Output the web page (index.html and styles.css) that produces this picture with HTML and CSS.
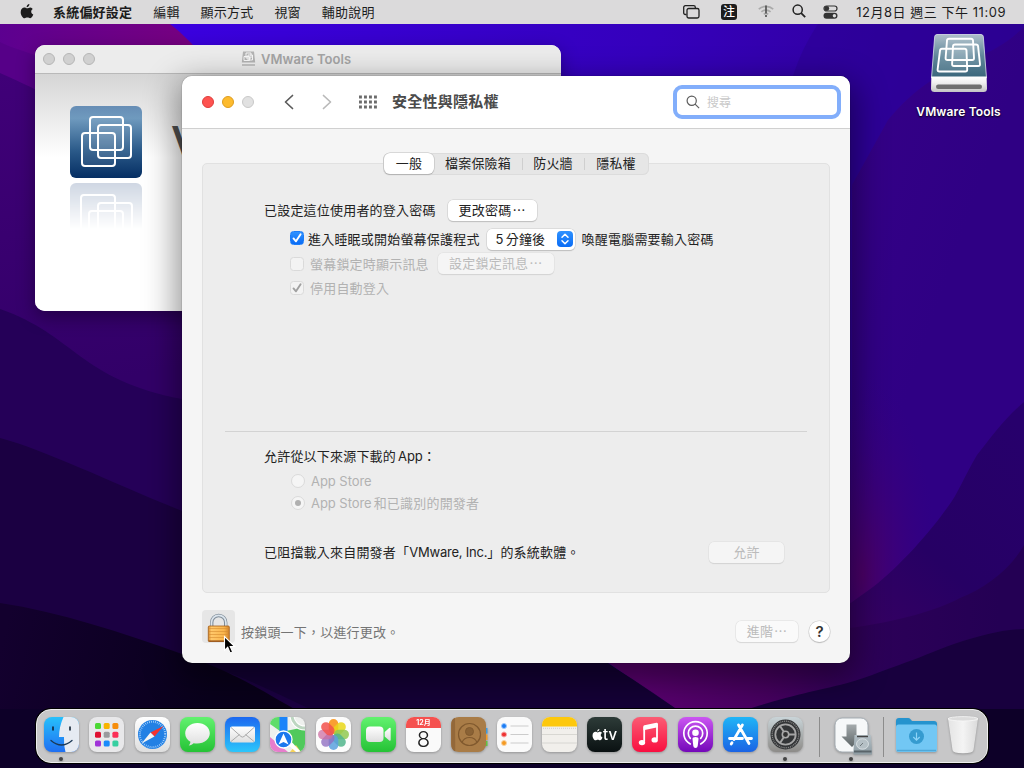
FILE: index.html
```
<!DOCTYPE html>
<html lang="zh-Hant">
<head>
<meta charset="utf-8">
<title>安全性與隱私權</title>
<link rel="stylesheet" href="styles.css">
</head>
<body>
<div class="desktop">
  <svg class="wallpaper" viewBox="0 0 1024 768" preserveAspectRatio="none">
    <defs>
      <linearGradient id="wBase" gradientUnits="userSpaceOnUse" x1="200" y1="0" x2="1024" y2="300"><stop offset="0" stop-color="#3a00de"/><stop offset=".5" stop-color="#3500bc"/><stop offset=".8" stop-color="#30009a"/><stop offset="1" stop-color="#2c0080"/></linearGradient>
      <linearGradient id="wMag" gradientUnits="userSpaceOnUse" x1="0" y1="24" x2="195" y2="50"><stop offset="0" stop-color="#5c0090"/><stop offset="1" stop-color="#780080"/></linearGradient>
      <linearGradient id="wLeft" gradientUnits="userSpaceOnUse" x1="0" y1="73" x2="60" y2="390"><stop offset="0" stop-color="#400078"/><stop offset="1" stop-color="#320068"/></linearGradient>
      <linearGradient id="wNavy" gradientUnits="userSpaceOnUse" x1="0" y1="650" x2="300" y2="720"><stop offset="0" stop-color="#13002e"/><stop offset=".7" stop-color="#09001c"/><stop offset="1" stop-color="#090018"/></linearGradient>
      <linearGradient id="wDeep" gradientUnits="userSpaceOnUse" x1="850" y1="0" x2="1024" y2="60"><stop offset="0" stop-color="#360088"/><stop offset="1" stop-color="#2f0084"/></linearGradient>
      <radialGradient id="wGlow" gradientUnits="userSpaceOnUse" cx="862" cy="575" r="100" gradientTransform="translate(862 575) scale(.75 2) translate(-862 -575)"><stop offset="0" stop-color="#4c0068"/><stop offset="1" stop-color="#380080" stop-opacity="0"/></radialGradient>
      <linearGradient id="wRight" gradientUnits="userSpaceOnUse" x1="850" y1="620" x2="1024" y2="430"><stop offset="0" stop-color="#360062"/><stop offset=".4" stop-color="#260064"/><stop offset="1" stop-color="#27006c"/></linearGradient>
      <linearGradient id="wLow" gradientUnits="userSpaceOnUse" x1="640" y1="0" x2="1000" y2="0"><stop offset="0" stop-color="#5a0070"/><stop offset=".35" stop-color="#470060"/><stop offset=".65" stop-color="#2c0058"/><stop offset="1" stop-color="#240054"/></linearGradient>
    </defs>
    <rect width="1024" height="768" fill="url(#wBase)"/>
    <path d="M818 24C806 42 798 60 793 76V200H1024V24Z" fill="#2c0094" opacity=".6"/>
    <path d="M1024 27C1008 42 995 50 977 57C940 72 915 88 888 120L852 185V768H1024Z" fill="url(#wDeep)"/>
    <path d="M0 24H170C210 55 260 120 300 300H0Z" fill="url(#wMag)"/>
    <path d="M0 42C25 55 90 66 210 130V330H0Z" fill="#560088"/>
    <path d="M0 73C20 82 50 95 80 115L320 300V450H0Z" fill="url(#wLeft)"/>
    <rect x="780" y="330" width="244" height="380" fill="url(#wGlow)"/>
    <path d="M1024 402C1005 418 992 436 977 455C965 475 958 494 947 508C930 532 900 566 873 587L820 625V768H1024Z" fill="url(#wRight)"/>
    <path d="M1024 545C1010 570 985 588 960 598C935 611 900 621 850 628L590 650L676 710H1024Z" fill="url(#wLow)"/>
    <path d="M1024 629C1000 630 980 636 963 641C940 648 925 656 907 662C880 672 860 680 840 685C810 692 790 696 745 710H1024Z" fill="#18003e"/>
    <path d="M0 309C75 335 80 380 182 399C350 430 450 500 600 650V710H0Z" fill="#250058"/>
    <path d="M0 438C45 450 110 482 182 511C350 550 510 590 675 708H0Z" fill="#1b0042"/>
    <path d="M200 663H608L676 709V768H0V709H310C270 690 240 675 200 663Z" fill="#140036"/>
    <path d="M0 603C60 612 120 632 182 654C240 675 260 690 300 712H0Z" fill="url(#wNavy)"/>
    <path d="M0 709H1024V768H0Z" fill="#0d0028"/>
  </svg>

  <header class="menubar">
    <nav class="menus">
      <svg class="apple" width="14" height="17" viewBox="0 0 14 17"><path d="M9.4 1c.1 1.900-1.300 3.100-2.800 3.200C6.500 2.600 7.900 1.200 9.400 1zM12.700 6.100c-2.300 1.500-1.800 4.600.6 5.500-.6 1.700-1.800 3.600-3.100 3.700-1.100 0-1.400-.7-2.800-.7s-1.800.7-2.800.7C2.700 15.300.6 12 .7 9 .7 6.100 2.500 4.500 4.400 4.500c1.200 0 2.100.8 2.900.8.900 0 1.800-.9 3.100-.8 1 .1 1.800.6 2.300 1.600z" fill="#1c1c1c"/></svg>
      <b>系統偏好設定</b><span>編輯</span><span>顯示方式</span><span>視窗</span><span>輔助說明</span>
    </nav>
    <div class="status">
      <svg class="s-win" width="17" height="14" viewBox="0 0 17 14" fill="none" stroke="#222" stroke-width="1.300"><path d="M3.500 9.500H2.300A1.600 1.600 0 0 1 .7 7.900V2.300A1.600 1.600 0 0 1 2.300.7h8.400a1.600 1.600 0 0 1 1.600 1.600V3"/><rect x="4" y="3.500" width="12" height="9.500" rx="1.700"/></svg>
      <span class="ime">注</span>
      <svg class="s-wifi" width="16" height="13" viewBox="0 0 16 13" fill="none"><path d="M.8 4.200C4.800.500 11.200.500 15.200 4.200M3.400 6.800C6 4.500 10 4.500 12.600 6.800M5.800 9.300C7 8.200 9 8.200 10.200 9.300" stroke="#aaa" stroke-width="1.700"/><path d="M8 .5v8M8 10v2" stroke="#555" stroke-width="1.700"/></svg>
      <svg class="s-find" width="14" height="14" viewBox="0 0 14 14" fill="none" stroke="#222" stroke-width="1.500"><circle cx="5.700" cy="5.700" r="4.600"/><path d="M9.200 9.200l4 4" stroke-width="1.800"/></svg>
      <svg class="s-cc" width="15" height="14" viewBox="0 0 15 14"><rect x="1" y="1" width="13" height="5" rx="2.500" fill="none" stroke="#333" stroke-width="1.200"/><circle cx="3.800" cy="3.500" r="2.400" fill="#333"/><rect x=".5" y="7.700" width="14" height="6" rx="3" fill="#333"/><circle cx="11.400" cy="10.700" r="1.700" fill="#ddd"/></svg>
      <time>12月8日 週三 下午 11:09</time>
    </div>
  </header>

  <div class="volume">
    <svg width="60" height="62" viewBox="0 0 60 62">
      <defs><linearGradient id="vd" x1="0" y1="0" x2="0" y2="1"><stop offset="0" stop-color="#aebfca"/><stop offset=".5" stop-color="#5f8699"/><stop offset="1" stop-color="#39657a"/></linearGradient><linearGradient id="vf" x1="0" y1="0" x2="0" y2="1"><stop offset="0" stop-color="#fff"/><stop offset=".4" stop-color="#f0f0f0"/><stop offset="1" stop-color="#c4c4c4"/></linearGradient></defs>
      <path d="M8 1.500h44q2 0 2.300 2L57.500 45H2.500L5.700 3.500Q6 1.500 8 1.500z" fill="url(#vd)" stroke="#dce5ea" stroke-width=".8"/>
      <path d="M2.400 43.500h55.200l.4 12q0 3.500-3.500 3.500h-49Q2 59 2 55.500z" fill="url(#vf)"/>
      <rect x="7" y="51.500" width="46" height="4.500" rx="2.200" fill="#707070"/>
      <g fill="#fff" fill-opacity=".1" stroke="#fff" stroke-width="1.900" stroke-linejoin="round"><path d="M20 5.700h22q1.800 0 2 1.800l1 17.500q.1 2-1.900 2H18.500q-2 0-1.900-2L18 7.500q.1-1.800 2-1.800z"/><path d="M26 11.500h21q1.900 0 2.100 1.900L51 31q.2 2-1.800 2H25q-2 0-1.900-2l.9-17.600q.1-1.900 2-1.900z"/><path d="M13 15.700h22.500q1.900 0 2 1.900l.7 18.900q.1 2-1.900 2H10.500q-2.100 0-1.900-2L11 17.600q.2-1.900 2-1.900z"/></g>
    </svg>
    <span>VMware Tools</span>
  </div>

  <section class="window installer">
    <div class="titlebar">
      <i class="light"></i><i class="light"></i><i class="light"></i>
      <div class="caption">
        <svg width="15" height="16" viewBox="0 0 15 16"><path d="M2 .500h11l1.200 11H.8z" fill="#b4b4b4"/><path d="M.7 12h13.600v3.300H.7z" fill="#efefef"/><path d="M1 14h13" stroke="#999" stroke-width="1.200"/><path d="M5 2h5v5H5zM7 4h4.500v5H7zM3 5.500h5.500v4H3z" fill="none" stroke="#f8f8f8"/></svg>
        <span>VMware Tools</span>
      </div>
    </div>
    <div class="installer-body">
      <div class="logo-col">
        <svg class="logo" width="72" height="72" viewBox="0 0 72 72"><defs><linearGradient id="lg" x1="0" y1="0" x2="0" y2="1"><stop offset="0" stop-color="#668db5"/><stop offset=".17" stop-color="#6f9abe"/><stop offset=".62" stop-color="#2b5a89"/><stop offset="1" stop-color="#052e63"/></linearGradient></defs><rect width="72" height="72" rx="6" fill="url(#lg)"/><g fill="#fff" fill-opacity=".08" stroke="#fff" stroke-width="2"><rect x="20" y="11" width="33" height="33" rx="3"/><rect x="28" y="19" width="33" height="33" rx="3"/><rect x="12" y="27" width="33" height="33" rx="3"/></g></svg>
        <svg class="mirror" width="72" height="48" viewBox="0 0 72 48"><rect width="72" height="72" rx="6" fill="#cfd7e3"/><g fill="none" stroke="#fff" stroke-width="2"><rect x="11" y="12" width="34" height="40" rx="3"/><rect x="28" y="20" width="34" height="40" rx="3"/><rect x="19" y="28" width="34" height="40" rx="3"/></g></svg>
      </div>
      <span class="big">V</span>
    </div>
  </section>

  <section class="window prefs">
    <div class="toolbar">
      <div class="lights"><i class="light red"></i><i class="light yellow"></i><i class="light gray"></i></div>
      <svg class="back" width="10" height="16" viewBox="0 0 10 16" fill="none" stroke="#5b5b5b" stroke-width="1.700" stroke-linecap="round" stroke-linejoin="round"><path d="M8.500 1.500L1.500 8l7 6.500"/></svg>
      <svg class="fwd" width="10" height="16" viewBox="0 0 10 16" fill="none" stroke="#b9b9b9" stroke-width="1.700" stroke-linecap="round" stroke-linejoin="round"><path d="M1.500 1.500l7 6.500-7 6.500"/></svg>
      <svg class="grid" width="19" height="14" viewBox="0 0 19 14" fill="none" stroke="#6c6c6c" stroke-width="2.800" stroke-dasharray="2.900 2.100"><path d="M0 2h18M0 7h18M0 12h18"/></svg>
      <h1>安全性與隱私權</h1>
      <div class="search"><svg width="14" height="14" viewBox="0 0 14 14" fill="none" stroke="#5c5c5c" stroke-width="1.200"><circle cx="5.700" cy="5.700" r="4.600"/><path d="M9.100 9.100l4 4"/></svg><span>搜尋</span></div>
    </div>
    <div class="content">
      <div class="tabs"><span class="tab on">一般</span><span class="tab t2">檔案保險箱</span><span class="tab t3">防火牆</span><span class="tab t4">隱私權</span></div>
      <div class="panel">
        <div class="row r1"><span>已設定這位使用者的登入密碼</span><button class="btn change">更改密碼<em>⋯</em></button></div>
        <div class="row r2"><i class="check blue"><svg width="14" height="14" viewBox="0 0 14 14" fill="none" stroke="#fff" stroke-width="1.900" stroke-linecap="round" stroke-linejoin="round"><path d="M3.500 7.400l2.500 2.900 4.600-7"/></svg></i><span>進入睡眠或開始螢幕保護程式</span>
          <div class="popup"><span><span class="num">5</span>分鐘後</span><svg width="16" height="16" viewBox="0 0 16 16"><defs><linearGradient id="pb" x1="0" y1="0" x2="0" y2="1"><stop offset="0" stop-color="#2f92ff"/><stop offset="1" stop-color="#0a6cf5"/></linearGradient></defs><rect width="16" height="16" rx="4" fill="url(#pb)"/><path d="M5 6.200L8 3.200l3 3M5 9.800l3 3 3-3" fill="none" stroke="#fff" stroke-width="1.500" stroke-linecap="round" stroke-linejoin="round"/></svg></div>
          <span>喚醒電腦需要輸入密碼</span></div>
        <div class="row r3 off"><i class="check"></i><span>螢幕鎖定時顯示訊息</span><button class="btn msg off">設定鎖定訊息<em>⋯</em></button></div>
        <div class="row r3 off"><i class="check"><svg width="14" height="14" viewBox="0 0 14 14" fill="none" stroke="#a0a0a0" stroke-width="1.900" stroke-linecap="round" stroke-linejoin="round"><path d="M3.500 7.400l2.500 2.900 4.600-7"/></svg></i><span>停用自動登入</span></div>
        <hr>
        <div class="row r5">允許從以下來源下載的<span class="latin app-word">App</span>：</div>
        <div class="row radio off"><i class="dot"></i><span class="latin">App Store</span></div>
        <div class="row radio off second"><i class="dot sel"></i><span class="latin">App Store</span><span class="after">和已識別的開發者</span></div>
        <div class="row r8"><div>已阻擋載入來自開發者「<span class="latin vendor">VMware, Inc.</span>」的系統軟體。</div><button class="btn allow off">允許</button></div>
      </div>
      <div class="footer">
        <div class="lock"><svg width="33" height="33" viewBox="0 0 33 33"><defs><linearGradient id="lk" x1="0" y1="0" x2="1" y2="0"><stop offset="0" stop-color="#d98c30"/><stop offset=".15" stop-color="#ffc86a"/><stop offset=".75" stop-color="#f9b54c"/><stop offset="1" stop-color="#d0822c"/></linearGradient></defs><path d="M9.700 17v-4.500a7 7 0 0 1 14 0V17" fill="none" stroke="#7f8c98" stroke-width="3.400"/><path d="M9.500 17v-4.500a7.200 7.200 0 0 1 14.400 0V17" fill="none" stroke="#dce5ed" stroke-width="1.700"/><rect x="6.300" y="16" width="21" height="15.500" rx="1" fill="url(#lk)" stroke="#a45e18" stroke-width=".8"/><path d="M7 18.500h19.500M7 21.500h19.500M7 24.500h19.500M7 27.500h19.500" stroke="#d58c30" stroke-width=".6"/><path d="M6.500 31h20.500" stroke="#8a4510"/></svg></div>
        <span class="hint">按鎖頭一下，以進行更改。</span>
        <button class="btn adv off">進階<em>⋯</em></button>
        <button class="help">?</button>
      </div>
    </div>
  </section>

  <svg class="cursor" width="14" height="20" viewBox="0 0 14 20"><path d="M1.500 1.500v13.800l3.200-3 2.400 5.600 2.500-1-2.400-5.400h4.500z" fill="#000" stroke="#fff" stroke-width="1.100"/></svg>

  <footer class="dock">
    <svg width="0" height="0" class="defs"><defs>
      <linearGradient id="dFind" x1="0" y1="0" x2="0" y2="1"><stop offset="0" stop-color="#27c0fb"/><stop offset="1" stop-color="#1f6ff2"/></linearGradient>
      <linearGradient id="dWhite" x1="0" y1="0" x2="0" y2="1"><stop offset="0" stop-color="#fff"/><stop offset="1" stop-color="#dedede"/></linearGradient>
      <linearGradient id="dGreen" x1="0" y1="0" x2="0" y2="1"><stop offset="0" stop-color="#62f26f"/><stop offset="1" stop-color="#25c235"/></linearGradient>
      <linearGradient id="dMail" x1="0" y1="0" x2="0" y2="1"><stop offset="0" stop-color="#1c68f0"/><stop offset="1" stop-color="#2cc6fb"/></linearGradient>
      <linearGradient id="dMusic" x1="0" y1="0" x2="0" y2="1"><stop offset="0" stop-color="#fb5c74"/><stop offset="1" stop-color="#f90f40"/></linearGradient>
      <linearGradient id="dPod" x1="0" y1="0" x2="0" y2="1"><stop offset="0" stop-color="#cb56f2"/><stop offset="1" stop-color="#7408b9"/></linearGradient>
      <linearGradient id="dStore" x1="0" y1="0" x2="0" y2="1"><stop offset="0" stop-color="#20b5f7"/><stop offset="1" stop-color="#1a63e4"/></linearGradient>
      <linearGradient id="dGear" x1="0" y1="0" x2="0" y2="1"><stop offset="0" stop-color="#c9d4d8"/><stop offset="1" stop-color="#8d8b88"/></linearGradient>
      <linearGradient id="dDisk" x1="0" y1="0" x2="0" y2="1"><stop offset="0" stop-color="#b3bfc5"/><stop offset="1" stop-color="#8e9ca3"/></linearGradient>
      <linearGradient id="dArrow" x1="0" y1="0" x2="0" y2="1"><stop offset="0" stop-color="#a5abad"/><stop offset="1" stop-color="#5d6567"/></linearGradient>
      <clipPath id="rr"><rect width="35" height="35" rx="8"/></clipPath>
    </defs></svg>
    <div class="app run"><svg viewBox="0 0 35 35"><g clip-path="url(#rr)"><rect width="35" height="35" fill="url(#dFind)"/><path d="M19.500 0Q15 10 15 20h5q-.5 8 1.500 15H35V0z" fill="#e6ebf2"/></g><path d="M9 10v3M26 10v3" stroke="#123" stroke-width="1.600" stroke-linecap="round"/><path d="M7 23.500q10.500 9 21 0" fill="none" stroke="#1b3855" stroke-width="1.300" stroke-linecap="round"/></svg></div>
    <div class="app"><svg viewBox="0 0 35 35"><rect width="35" height="35" rx="8" fill="#e8e8ea"/><g><rect x="6" y="6" width="6" height="6" rx="1.500" fill="#4cd834"/><rect x="14.700" y="6" width="6" height="6" rx="1.500" fill="#f8b400"/><rect x="23.400" y="6" width="6" height="6" rx="1.500" fill="#f68d0c"/><rect x="6" y="14.700" width="6" height="6" rx="1.500" fill="#df1030"/><rect x="14.700" y="14.700" width="6" height="6" rx="1.500" fill="#9a9a9e"/><rect x="23.400" y="14.700" width="6" height="6" rx="1.500" fill="#fb2e56"/><rect x="6" y="23.400" width="6" height="6" rx="1.500" fill="#a033d8"/><rect x="14.700" y="23.400" width="6" height="6" rx="1.500" fill="#188bfb"/><rect x="23.400" y="23.400" width="6" height="6" rx="1.500" fill="#36cfa0"/></g></svg></div>
    <div class="app"><svg viewBox="0 0 35 35"><rect width="35" height="35" rx="8" fill="url(#dWhite)"/><circle cx="17.500" cy="17.500" r="14.500" fill="#2280e4"/><circle cx="17.500" cy="17.500" r="12.700" fill="none" stroke="#b9dcff" stroke-width="2" stroke-dasharray=".7 1.300"/><path d="M28.500 9L19.500 19.500l-4-4z" fill="#f4322e"/><path d="M6.500 26.500l9-11 4 4z" fill="#f4f4f4"/></svg></div>
    <div class="app"><svg viewBox="0 0 35 35"><rect width="35" height="35" rx="8" fill="url(#dGreen)"/><path d="M17.500 6C10.500 6 5.200 10.500 5.200 16.300c0 3.700 2 6.700 5.200 8.500 0 1.500-.8 2.700-1.700 3.700 2.200-.2 3.800-1.100 4.900-2.300 9 1.700 16.200-3.200 16.200-9.900C29.800 10.500 24.500 6 17.500 6z" fill="url(#dWhite)"/></svg></div>
    <div class="app"><svg viewBox="0 0 35 35"><rect width="35" height="35" rx="8" fill="url(#dMail)"/><rect x="5" y="9.500" width="25" height="16" rx="2" fill="url(#dWhite)"/><path d="M6 10.500l10 9q1.500 1.200 3 0l10-9M6 24.500l8.500-7M29 24.500l-8.500-7" fill="none" stroke="#aaa" stroke-width="1"/></svg></div>
    <div class="app"><svg viewBox="0 0 35 35"><g clip-path="url(#rr)"><rect width="35" height="35" fill="#eef0ee"/><path d="M0 0h10v14L0 7z" fill="#5fdd69"/><path d="M0 20l18 15H0z" fill="#e77dcc"/><path d="M16 14l19-4v25H29L16 20z" fill="#50c95c"/><path d="M20 35l6-7 5 7z" fill="#f7d259"/><path d="M17 20l14 15h-5L14 24z" fill="#fff"/><path d="M22-3a13 13 0 0 0 14 14" fill="none" stroke="#fff" stroke-width="5"/><path d="M22-3a13 13 0 0 0 14 14" fill="none" stroke="#bdd6c1" stroke-width="3"/><path d="M9.500 0h8v17h-8z" fill="#1b84fa"/></g><circle cx="13.500" cy="22.500" r="8.500" fill="#1b78ee" stroke="#fff" stroke-width="1.300"/><path d="M13.500 16.500l5 11-5-2.500-5 2.500z" fill="#fff"/></svg></div>
    <div class="app"><svg viewBox="0 0 35 35"><rect width="35" height="35" rx="8" fill="#fcfcfc"/><g opacity=".9" transform="translate(17.500 17.500)"><rect x="-4.800" y="-15.500" width="9.600" height="15" rx="4.800" fill="#f9961d"/><rect x="-4.800" y="-15.500" width="9.600" height="15" rx="4.800" fill="#e8d400" fill-opacity=".85" transform="rotate(45)"/><rect x="-4.800" y="-15.500" width="9.600" height="15" rx="4.800" fill="#86c440" fill-opacity=".85" transform="rotate(90)"/><rect x="-4.800" y="-15.500" width="9.600" height="15" rx="4.800" fill="#3fae80" fill-opacity=".85" transform="rotate(135)"/><rect x="-4.800" y="-15.500" width="9.600" height="15" rx="4.800" fill="#4a98dc" fill-opacity=".85" transform="rotate(180)"/><rect x="-4.800" y="-15.500" width="9.600" height="15" rx="4.800" fill="#8560bb" fill-opacity=".8" transform="rotate(225)"/><rect x="-4.800" y="-15.500" width="9.600" height="15" rx="4.800" fill="#c8609a" fill-opacity=".75" transform="rotate(270)"/><rect x="-4.800" y="-15.500" width="9.600" height="15" rx="4.800" fill="#f24038" fill-opacity=".85" transform="rotate(315)"/></g></svg></div>
    <div class="app"><svg viewBox="0 0 35 35"><rect width="35" height="35" rx="8" fill="url(#dGreen)"/><rect x="5" y="9.500" width="17.500" height="15.500" rx="4" fill="url(#dWhite)"/><path d="M23.700 15l4.500-4q1.500-.8 1.500.8v11q0 1.600-1.500.8l-4.500-4z" fill="url(#dWhite)"/></svg></div>
    <div class="app cal"><span class="mon">12月</span><span class="day">8</span></div>
    <div class="app"><svg viewBox="0 0 35 35"><path d="M34 11h2.500v5.500H34z" fill="#3b9be0"/><path d="M34 17.500h2.500V23H34z" fill="#f39b24"/><path d="M34 24h2.500v5H34z" fill="#62c242"/><rect width="35" height="35" rx="8" fill="#a97c47"/><path d="M4 .8Q0 2 .3 8v19q0 6 4 7.500z" fill="#93683a"/><g fill="none" stroke="#80592e" stroke-width="1.200"><circle cx="18.500" cy="17.500" r="11"/><path d="M11 25.500q2-5 7.500-5t7.500 5"/></g><circle cx="18.500" cy="14.500" r="4" fill="#8a6235" stroke="#80592e"/></svg></div>
    <div class="app"><svg viewBox="0 0 35 35"><rect width="35" height="35" rx="8" fill="#fafafa"/><path d="M13.500 9h18M13.500 17.500h18M13.500 26h18" stroke="#ccc" stroke-width="1"/><g stroke-width="1"><circle cx="7" cy="9" r="2.500" fill="#1a7bf4" stroke="#9bc7fa"/><circle cx="7" cy="17.500" r="2.500" fill="#ee3333" stroke="#f7a9a9"/><circle cx="7" cy="26" r="2.500" fill="#f59a22" stroke="#f9d2a0"/></g></svg></div>
    <div class="app"><svg viewBox="0 0 35 35"><g clip-path="url(#rr)"><rect width="35" height="35" fill="#f1efeb"/><rect width="35" height="9.500" fill="#fdc80d"/><path d="M0 17.500h35M0 26h35" stroke="#d2d0cc" stroke-width=".8"/><path d="M1 11.300h34" stroke="#bbb" stroke-width=".8" stroke-dasharray=".8 1.200"/></g></svg></div>
    <div class="app tv"><svg viewBox="0 0 14 17"><path d="M9.400 1c.1 1.900-1.300 3.100-2.800 3.200C6.500 2.600 7.900 1.200 9.400 1zM12.700 6.100c-2.300 1.500-1.800 4.600.6 5.500-.6 1.700-1.800 3.600-3.100 3.700-1.100 0-1.400-.7-2.800-.7s-1.800.7-2.800.7C2.700 15.300.6 12 .7 9 .7 6.100 2.500 4.500 4.400 4.500c1.200 0 2.100.8 2.900.8.900 0 1.800-.9 3.100-.8 1 .1 1.800.6 2.300 1.600z" fill="#fff"/></svg><span>tv</span></div>
    <div class="app"><svg viewBox="0 0 35 35"><rect width="35" height="35" rx="8" fill="url(#dMusic)"/><path d="M12.200 24.500V10.200l12.800-2.700v14.300" fill="none" stroke="#fff" stroke-width="1.800"/><path d="M11.500 9.200q0-.8.900-1l12-2.500q1.300-.2 1.300.9v3.600l-14.200 3z" fill="#fff"/><ellipse cx="10" cy="25.600" rx="3.200" ry="2.600" fill="#fff"/><ellipse cx="22.700" cy="22.900" rx="3.200" ry="2.600" fill="#fff"/></svg></div>
    <div class="app"><svg viewBox="0 0 35 35"><rect width="35" height="35" rx="8" fill="url(#dPod)"/><g fill="none" stroke="#fff" stroke-width="1.700" stroke-linecap="round"><path d="M12.300 26.900a11.700 11.700 0 1 1 10.400 0"/><path d="M12.300 21.300a7.200 7.200 0 1 1 10.400 0"/></g><circle cx="17.500" cy="15.800" r="3.300" fill="#fff"/><path d="M14.500 22q0-1.900 3-1.900t3 1.900l-.8 7q-.3 2-2.200 2t-2.200-2z" fill="#fff"/></svg></div>
    <div class="app"><svg viewBox="0 0 35 35"><rect width="35" height="35" rx="8" fill="url(#dStore)"/><g stroke="#fff" stroke-width="2.800" stroke-linecap="round" fill="none"><path d="M19.400 8l-8.400 14.500M15.500 8l10.500 18.500M6.500 21.500h13M24.500 21.500h4M9 25.800l-.8 1.300"/></g></svg></div>
    <div class="app run"><svg viewBox="0 0 35 35"><rect width="35" height="35" rx="8" fill="url(#dGear)"/><circle cx="17.500" cy="17.500" r="15" fill="#333537"/><circle cx="17.500" cy="17.500" r="13.300" fill="none" stroke="#8a8a8a" stroke-width="1.300" stroke-dasharray="1 .9"/><circle cx="17.500" cy="17.500" r="10.200" fill="none" stroke="#a5a5a5" stroke-width="1.800"/><path d="M20.500 17.500H27M16 15L12 9M16 20l-4 6" stroke="#a5a5a5" stroke-width="2"/><circle cx="17.500" cy="17.500" r="3.200" fill="#333" stroke="#aaa" stroke-width="1.600"/></svg></div>
    <i class="sep s1"></i>
    <div class="app run inst"><svg viewBox="0 0 38 38"><rect x="1" y="1" width="33" height="34" rx="7" fill="#f6f8f9" stroke="#a5adb3"/><path d="M12.500 7.500h10v12h5.500L18 30 7.500 19.500h5z" fill="url(#dArrow)"/><path d="M20.500 18h16.300l1.200 15v4.500H19.500V33z" fill="url(#dDisk)"/><ellipse cx="28.500" cy="27" rx="6" ry="5.200" fill="#b5c0c5" stroke="#dfe6e8" stroke-width=".8"/><path d="M26 29l3-3" stroke="#70797d" stroke-width="1"/><path d="M20 34.500h17.500" stroke="#59646a" stroke-width="2"/><path d="M23 19.500h11" stroke="#444" stroke-width="1.400"/></svg></div>
    <i class="sep s2"></i>
    <div class="app folder"><svg viewBox="0 0 41 35"><path d="M0 4Q0 1 3 1h9q1.500 0 2.500 1.200L16 4h22q3 0 3 3v23H0z" fill="#2593ce"/><rect y="7.500" width="41" height="27.500" rx="2.500" fill="#72c7f4"/><path d="M1 33.500h39" stroke="#4fa8d8" stroke-width="1.500"/><circle cx="20.500" cy="19.500" r="7.500" fill="#359bd0"/><path d="M20.500 15.500v7.500M17.300 20l3.200 3.200 3.200-3.200" fill="none" stroke="#8dd4f8" stroke-width="1.200"/></svg></div>
    <div class="app trash"><svg viewBox="0 0 32 38"><defs><linearGradient id="tr" x1="0" y1="0" x2="1" y2="0"><stop offset="0" stop-color="#e4e4e4"/><stop offset=".5" stop-color="#f4f4f4"/><stop offset="1" stop-color="#dadada"/></linearGradient></defs><path d="M1 2.500L5.500 34q.5 3.300 10.500 3.300T26.500 34L31 2.500z" fill="url(#tr)"/><ellipse cx="16" cy="2.800" rx="15" ry="2.200" fill="#dcdcdc" stroke="#f8f8f8" stroke-width=".8"/></svg></div>
  </footer>
</div>
</body>
</html>
```
FILE: styles.css
```
* { box-sizing: border-box; }
body { margin: 0; font-family: Inter, "Noto Sans CJK TC", sans-serif; font-size: 13px; color: #222; }
h1, hr { margin: 0; }
i, em { font-style: normal; }
svg { display: block; flex: none; }
.desktop { position: relative; width: 1024px; height: 768px; overflow: hidden; background: #17003e; white-space: nowrap; }
.wallpaper { position: absolute; inset: 0; width: 1024px; height: 768px; }

.menubar { position: relative; height: 24px; display: flex; justify-content: space-between; align-items: center; background: #dbdadb; padding: 0 18px 2px 20px; letter-spacing: .2px; color: #1c1c1c; }
.menus { display: flex; align-items: center; }
.menus span { margin-left: 21px; }
.menus b { margin-left: 19px; font-weight: 700; }
.status { display: flex; align-items: center; }
.ime { width: 16px; height: 16px; margin: 1px 21px 0 21px; border-radius: 3px; background: #1d1d1d; color: #fff; font-size: 12px; line-height: 15px; text-align: center; font-weight: 500; letter-spacing: 0; }
.s-wifi { margin-right: 18px; }
.s-find { margin-right: 17px; }
.s-cc { margin-right: 17px; }
.s-win, .s-cc { margin-top: 1px; }
.status time { width: 151px; letter-spacing: .53px; display: flex; justify-content: flex-end; white-space: pre; }

.volume { position: absolute; left: 908px; top: 33px; width: 101px; display: flex; flex-direction: column; align-items: center; gap: 9px; color: #fff; font-weight: 600; font-size: 12px; line-height: 16px; letter-spacing: .15px; text-shadow: 0 1px 2px #000; }

.window { position: absolute; border-radius: 10px; overflow: hidden; }
.light { display: block; width: 12px; height: 12px; border-radius: 50%; background: #d0d0d0; border: 1px solid #b5b5b5; }
.installer { left: 35px; top: 45px; width: 526px; height: 266px; background: #fff; box-shadow: 0 6px 18px rgba(0,0,0,.35); }
.titlebar { height: 29px; display: flex; align-items: center; gap: 8px; padding-left: 8px; background: #ececec; border-bottom: 1px solid #b9b9b9; }
.caption { display: flex; align-items: center; gap: 5px; margin-left: 138px; font-weight: 600; letter-spacing: .05px; color: #a5a5a5; }
.installer-body { display: flex; height: 237px; padding: 32px 0 0 35px; background: linear-gradient(#d5d5d5, #fff 84px); }
.logo-col { display: flex; flex-direction: column; gap: 5px; }
.mirror { mask-image: linear-gradient(#000, transparent 46px); }
.big { margin: 11px 0 0 29px; font-size: 40px; line-height: 48px; font-weight: 600; color: #505050; }

.prefs { left: 182px; top: 76px; width: 668px; height: 587px; background: #f5f5f5; overflow: visible; box-shadow: 0 0 1px rgba(0,0,0,.7), 0 12px 32px 6px rgba(0,0,0,.42); }
.toolbar { height: 53px; display: flex; align-items: center; background: #fff; border-bottom: 1px solid #d0d0d0; border-radius: 10px 10px 0 0; padding: 0 9px 0 20px; }
.lights { display: flex; gap: 8px; }
.red { background: #fe5350; border-color: #df3d3b; }
.yellow { background: #fdbb2e; border-color: #de9d1f; }
.gray { background: #e1e1e1; border-color: #c9c9c9; }
.back { margin-left: 30px; }
.fwd { margin-left: 28px; }
.grid { margin-left: 27px; }
h1 { margin-left: 14px; font-size: 15px; line-height: 20px; font-weight: 700; color: #4b4b4b; letter-spacing: .25px; }
.search { margin-left: auto; width: 168px; height: 34px; border: 4px solid #82aefb; border-radius: 9px; display: flex; align-items: center; gap: 7px; padding-left: 9px; color: #c9c9c9; font-size: 12px; }
.search span { margin-top: -1px; }
.content { padding: 24px 20px 0; }
.tabs { position: relative; width: 266px; height: 22px; margin: 0 auto -12px 181px; padding-left: 1px; display: flex; border-radius: 6px; background: #e6e6e6; box-shadow: inset 0 0 0 1px #dcdcdc; }
.tab { height: 22px; line-height: 20px; text-align: center; letter-spacing: .2px; }
.on { width: 50px; height: 21px; background: #fff; border-radius: 6px; box-shadow: 0 0 0 .5px #bbb, 0 1px 1px #aaa; }
.t2 { width: 88px; }
.t3 { width: 62px; }
.t4 { width: 64px; }
.t3, .t4 { background: linear-gradient(#cfcfcf, #cfcfcf) 0 5px / 1px 12px no-repeat; }
.panel { height: 430px; padding: 35px 22px 0; background: #ededed; border: 1px solid #e1e1e1; border-radius: 5px; letter-spacing: .2px; }
.row { display: flex; align-items: center; line-height: 20px; padding-left: 39px; }
.latin { letter-spacing: -.05px; }
.vendor { letter-spacing: -.22px; }
.app-word { margin-left: 2px; }
.r1 { height: 22px; }
.btn { font: inherit; letter-spacing: .2px; color: #222; height: 21px; line-height: 19px; padding: 0; border: 0; border-radius: 5px; background: #fff; box-shadow: 0 0 0 .5px #ccc, 0 1px 1px rgba(0,0,0,.25); }
.btn em { margin-left: 1px; }
.off { color: #b2b2b2; }
.btn.off { color: #bbb; background: #f5f5f5; box-shadow: 0 0 0 .5px #ddd, 0 1px 1px rgba(0,0,0,.15); }
.change { width: 89px; margin-left: 12px; }
.check { width: 14px; height: 14px; border-radius: 3.5px; border: 1px solid #dadada; background: #f3f3f3; display: block; }
.check svg { margin: -1px; }
.blue { background: linear-gradient(#2f92ff, #0a6cf5); border-color: #1b7dfa; margin-bottom: 3px; }
.r2 { height: 26px; margin-top: 5px; padding-left: 65px; }
.r2 .check { margin-right: 4px; }
.popup { width: 88px; height: 21px; margin: 0 7px; display: flex; align-items: center; justify-content: space-between; padding: 0 2px 0 9px; border-radius: 5px; background: #fff; box-shadow: 0 0 0 .5px #ccc, 0 1px 1px rgba(0,0,0,.25); }
.num { margin-right: 2px; }
.r3 { height: 23px; padding-left: 65px; }
.r3 + .r3 { margin-top: 1px; }
.r3 .check { margin-right: 6px; }
.msg { width: 116px; margin-left: 9px; }
hr { border: 0; height: 1px; background: #d3d3d3; margin-top: 132px; }
.r5 { height: 20px; margin-top: 14px; }
.radio { height: 21px; margin-top: 4px; padding-left: 66px; }
.second { margin-top: 1px; }
.dot { width: 14px; height: 14px; border-radius: 50%; border: 1px solid #dadada; background: #f5f5f5; margin-right: 6px; display: flex; align-items: center; justify-content: center; }
.sel::after { content: ""; width: 6px; height: 6px; border-radius: 50%; background: #b0b0b0; }
.after { margin-left: 2px; }
.r8 { height: 22px; margin-top: 28px; justify-content: space-between; padding-right: 23px; }
.allow { width: 75px; }
.footer { height: 42px; margin-top: 17px; display: flex; align-items: flex-start; }
.lock { width: 33px; height: 33px; border-radius: 4px; background: #e6e6e6; }
.hint { margin: 12px auto 0 6px; line-height: 20px; letter-spacing: .2px; color: #747474; }
.adv { width: 62px; margin: 11px 11px 0 0; }
.btn.adv { background: #fafafa; }
.help { width: 21px; height: 21px; margin-top: 11px; padding: 0; border: 0; border-radius: 50%; background: #fff; font: 600 15px/21px Inter, sans-serif; color: #333; box-shadow: 0 0 0 .5px #ccc, 0 1px 1px rgba(0,0,0,.3); }
.cursor { position: absolute; left: 223px; top: 635px; }

.dock { position: absolute; left: 36px; top: 709px; width: 952px; height: 54px; border-radius: 15px; background: #c7c7c8; border: 1px solid #eee; box-shadow: 0 0 0 1px #000; padding: 7px 8px 0 7px; display: flex; gap: 10.25px; }
.defs { position: absolute; }
.app { position: relative; width: 35px; height: 35px; flex: none; border-radius: 8px; filter: drop-shadow(0 1px 1px rgba(0,0,0,.25)); }
.app svg { width: 100%; height: 100%; overflow: visible; }
.run::after { content: ""; position: absolute; left: 50%; top: 40px; width: 4px; height: 4px; margin-left: -3px; border-radius: 50%; background: #444; }
.cal { display: flex; flex-direction: column; align-items: center; overflow: hidden; background: #fafafa; }
.mon { align-self: stretch; height: 11px; line-height: 11px; font-size: 7px; font-weight: 700; text-align: center; background: #f5514f; color: #fff; }
.day { font-size: 22px; line-height: 22px; font-weight: 300; }
.tv { background: linear-gradient(#2d3b38, #0a1112); display: flex; align-items: center; padding-left: 5px; color: #fff; font-size: 15px; font-weight: 500; line-height: 20px; }
.app.tv svg { width: 11px; height: 14px; }
.sep { width: 1px; height: 40px; background: #8c8c8c; flex: none; }
.s1 { margin-left: 5.500px; }
.inst { width: 38px; height: 38px; margin-left: 4px; }
.inst::after { margin-left: -4px; }
.s2 { margin-left: 1px; }
.folder { width: 41px; margin-left: 1px; }
.trash { width: 32px; height: 38px; margin-top: -1px; }
```
